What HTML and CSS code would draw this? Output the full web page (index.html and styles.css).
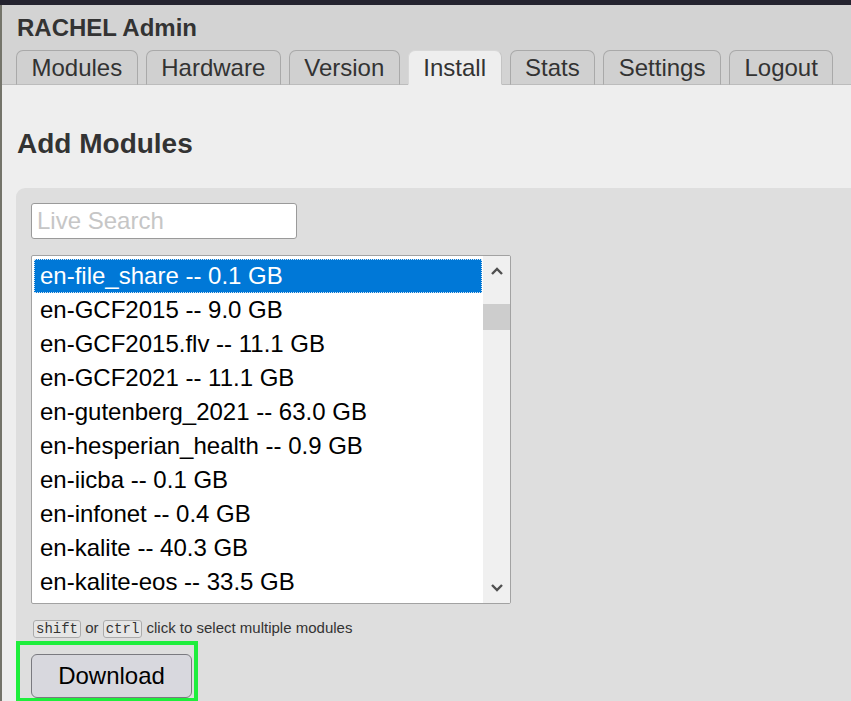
FILE: index.html
```html
<!DOCTYPE html>
<html>
<head>
<meta charset="utf-8">
<title>RACHEL Admin</title>
<link rel="stylesheet" href="styles.css">
</head>
<body>
<div class="topbar"></div>
<div class="page">
  <div class="header">
    <div class="brand">RACHEL Admin</div>
    <div class="tabs">
      <span class="tab">Modules</span>
      <span class="tab">Hardware</span>
      <span class="tab">Version</span>
      <span class="tab active">Install</span>
      <span class="tab">Stats</span>
      <span class="tab">Settings</span>
      <span class="tab">Logout</span>
    </div>
  </div>
  <div class="content">
    <h2 class="title">Add Modules</h2>
    <div class="panel">
      <input class="search" type="text" placeholder="Live Search">
      <div class="select">
        <div class="options">
          <div class="opt selected">en-file_share -- 0.1 GB</div>
          <div class="opt">en-GCF2015 -- 9.0 GB</div>
          <div class="opt">en-GCF2015.flv -- 11.1 GB</div>
          <div class="opt">en-GCF2021 -- 11.1 GB</div>
          <div class="opt">en-gutenberg_2021 -- 63.0 GB</div>
          <div class="opt">en-hesperian_health -- 0.9 GB</div>
          <div class="opt">en-iicba -- 0.1 GB</div>
          <div class="opt">en-infonet -- 0.4 GB</div>
          <div class="opt">en-kalite -- 40.3 GB</div>
          <div class="opt">en-kalite-eos -- 33.5 GB</div>
        </div>
        <div class="scrollbar">
          <div class="arrow">
            <svg width="14" height="10" viewBox="0 0 14 10"><path d="M2 8 L7 3 L12 8" fill="none" stroke="#505050" stroke-width="2.4"/></svg>
          </div>
          <div class="track"><div class="thumb"></div></div>
          <div class="arrow">
            <svg width="14" height="10" viewBox="0 0 14 10"><path d="M2 2 L7 7 L12 2" fill="none" stroke="#505050" stroke-width="2.4"/></svg>
          </div>
        </div>
      </div>
      <p class="hint"><kbd>shift</kbd> or <kbd>ctrl</kbd> click to select multiple modules</p>
      <div class="dl-wrap">
        <button class="download">Download</button>
        <div class="highlight"></div>
      </div>
    </div>
  </div>
</div>
</body>
</html>
```
FILE: styles.css
```css
html, body {
  margin: 0;
  padding: 0;
  background: #eeeeee;
  font-family: "Liberation Sans", Arial, sans-serif;
  overflow: hidden;
}
.topbar {
  height: 5px;
  background: #24232f;
}
.page {
  border-left: 2px solid #74746a;
  min-height: 700px;
  background: #eeeeee;
}
.header {
  background: #d3d3d3;
  padding: 9px 0 0 14px;
  border-bottom: 1px solid #bcbcbc;
}
.brand {
  font-size: 24px;
  line-height: 28px;
  font-weight: bold;
  color: #333;
  padding-left: 1px;
}
.tabs {
  display: flex;
  gap: 8px;
  margin-top: 8px;
  margin-bottom: -1px;
}
.tab {
  font-size: 24px;
  line-height: 33px;
  color: #333;
  padding: 0 14.5px;
  border: 1px solid #a9a9a9;
  border-bottom: 1px solid #bcbcbc;
  border-radius: 7px 7px 0 0;
  background: #d0d0d0;
}
.tab.active {
  background: #eeeeee;
  border-bottom-color: #eeeeee;
  border-top-color: #d8d8d8;
  border-left-color: #d8d8d8;
  border-right-color: #c4c4c4;
}
.content {
  padding-left: 14px;
}
.title {
  margin: 43px 0 28px 1px;
  font-size: 28px;
  line-height: 32px;
  font-weight: bold;
  color: #333;
}
.panel {
  background: #dedede;
  border-top-left-radius: 9px;
  padding: 15px 15px 40px 15px;
}
.search {
  display: block;
  box-sizing: border-box;
  width: 266px;
  height: 36px;
  margin: 0;
  padding: 0 5px;
  border: 1px solid #9a9a9a;
  border-radius: 3px;
  background: #fff;
  font-family: "Liberation Sans", Arial, sans-serif;
  font-size: 24px;
  outline: none;
}
.search::placeholder {
  color: #c6c6c6;
}
.select {
  display: flex;
  box-sizing: border-box;
  width: 480px;
  height: 349px;
  margin-top: 16px;
  border: 1px solid #a2a2a2;
  border-radius: 2px;
  background: #fff;
  overflow: hidden;
}
.options {
  width: 448px;
  padding: 3px 0 0 2px;
}
.opt {
  height: 34px;
  line-height: 34px;
  font-size: 24px;
  color: #000;
  padding-left: 6px;
  white-space: nowrap;
  box-sizing: border-box;
}
.opt.selected {
  background: #0078d7;
  color: #fff;
  outline: 1px dotted #d8e6f2;
  outline-offset: -1px;
}
.scrollbar {
  width: 27px;
  margin-left: 1px;
  background: #f0f0f0;
  display: flex;
  flex-direction: column;
}
.arrow {
  height: 30px;
  display: flex;
  align-items: center;
  justify-content: center;
}
.track {
  flex: 1;
  padding-top: 18px;
}
.thumb {
  height: 26px;
  background: #cdcdcd;
}
.hint {
  margin: 14px 0 0 2px;
  font-size: 15px;
  line-height: 19px;
  color: #333;
}
kbd {
  font-family: "Liberation Mono", "Courier New", monospace;
  font-size: 14px;
  color: #333;
  background: #e6e6e6;
  border: 1px solid #ababab;
  border-radius: 3px;
  padding: 0 2px;
}
.dl-wrap {
  position: relative;
  width: 161px;
  margin-top: 15px;
}
.download {
  display: block;
  box-sizing: border-box;
  width: 161px;
  height: 44px;
  margin: 0;
  padding: 0;
  background: #d8d8de;
  border: 1px solid #7a7a80;
  border-radius: 6px;
  font-family: "Liberation Sans", Arial, sans-serif;
  font-size: 24px;
  color: #000;
}
.highlight {
  position: absolute;
  top: -13px;
  left: -15px;
  right: -6px;
  bottom: -4px;
  border: 4px solid #1eee3c;
}
```
